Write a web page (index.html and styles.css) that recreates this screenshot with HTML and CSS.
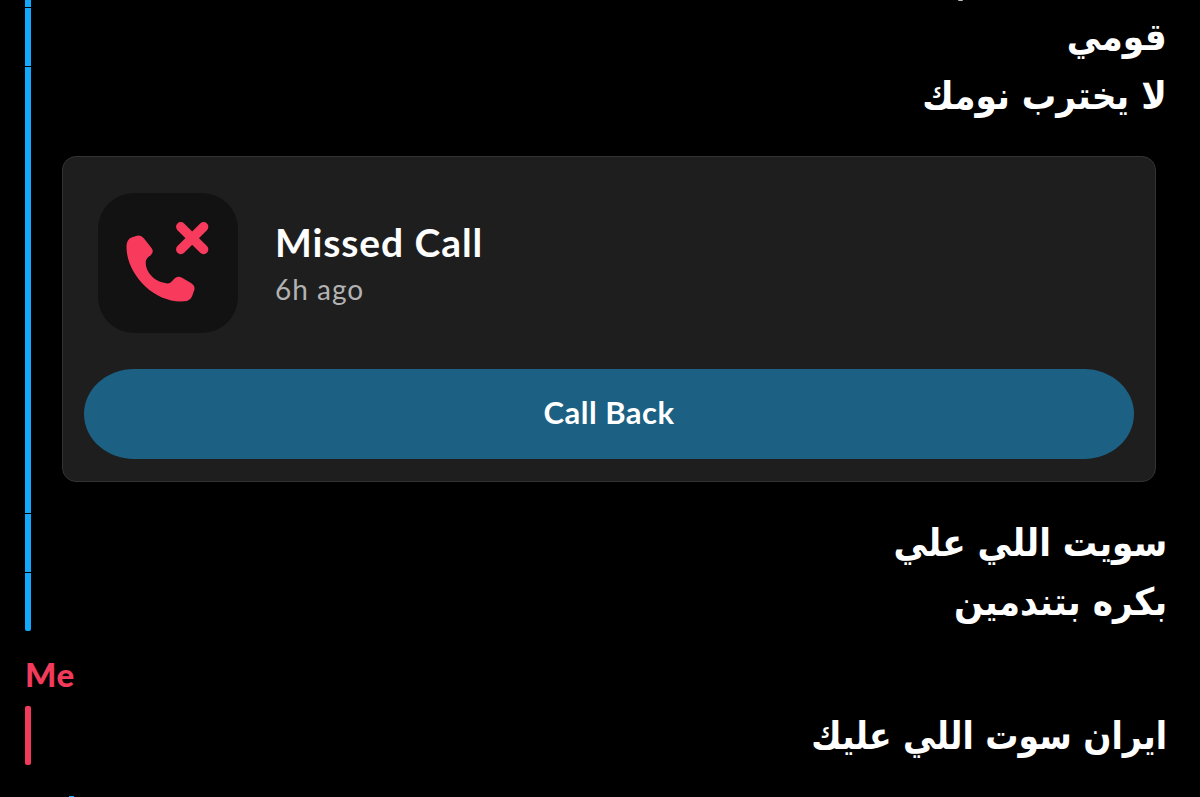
FILE: index.html
```
<!DOCTYPE html>
<html lang="ar">
<head>
  <meta charset="UTF-8">
  <meta name="viewport" content="width=device-width, initial-scale=1.0">
  <title>Chat</title>
  <link rel="stylesheet" href="styles.css">
</head>
<body>
  <div class="chat">
    <div class="group friend">
      <div class="row row-cut"><span class="dot"></span></div>
      <div class="row"><p class="message" dir="rtl">قومي</p></div>
      <div class="row"><p class="message" dir="rtl">لا يخترب نومك</p></div>
      <div class="row row-card">
        <div class="card" lang="en">
          <div class="card-top">
            <div class="call-icon">
              <svg viewBox="0 0 140 140" width="140" height="140">
                <path class="phone" d="M33.5 44.5 L39 42.8 Q43 41.8 46 45.5 L53.5 55 Q56.5 59 52.5 62.5 Q48 65 47.7 69 C47.5 80 57.5 89.5 69.3 90.4 Q72 90.5 74 88.2 L76.5 85.5 Q80 82.5 84 84.8 L93 90 Q97.5 93 96.3 97 L94 103.5 Q92.5 107 89 108 C58 112.5 28.5 82 28.5 54 Q28.5 46.5 33.5 44.5 Z"/>
                <path class="cross" d="M82.8 33.8 L105.6 56.4 M105.6 33.8 L82.8 56.4"/>
              </svg>
            </div>
            <div class="call-text">
              <h2 class="call-title">Missed Call</h2>
              <p class="call-time">6h ago</p>
            </div>
          </div>
          <button class="call-back">Call Back</button>
        </div>
      </div>
      <div class="row"><p class="message" dir="rtl">سويت اللي علي</p></div>
      <div class="row last"><p class="message" dir="rtl">بكره بتندمين</p></div>
    </div>
    <div class="sender" lang="en">Me</div>
    <div class="group me">
      <div class="row only"><p class="message message-long" dir="rtl">ايران سوت اللي عليك</p></div>
    </div>
    <div class="next-sender"></div>
  </div>
</body>
</html>
```

FILE: styles.css
```
* {
  box-sizing: border-box;
  margin: 0;
  padding: 0;
}

body {
  background-color: #000;
  color: #fff;
  font-family: Lato, "DejaVu Sans", sans-serif;
  overflow: hidden;
}

.chat {
  width: 1200px;
  height: 797px;
  overflow: hidden;
}

.group {
  --bar: #14a8fd;
  padding-left: 25px;
}

.me {
  --bar: #f23b5b;
}

.row {
  display: flex;
  justify-content: flex-end;
  height: 59px;
  padding-right: 33px;
}

/* vertical line in the sender's colour */
.row::before {
  content: "";
  width: 6px;
  margin: 1px auto 0 0;
  background-color: var(--bar);
}

.row-cut {
  height: 7px;
  padding-right: 237px;
}

.row-cut::before,
.row-card::before {
  margin-top: 0;
}

.last::before {
  border-radius: 0 0 2px 2px;
}

.only::before {
  margin-top: 0;
  border-radius: 2px;
}

.dot {
  width: 5px;
  height: 1px;
  border-radius: 0 0 3px 3px;
  background-color: #bbb;
}

.message {
  padding-top: 1px;
  font-family: "DejaVu Sans", sans-serif;
  font-size: 38px;
  font-weight: bold;
  line-height: 59px;
  white-space: nowrap;
  transform: scaleX(0.903);
  transform-origin: right center;
}

.message-long {
  transform: scaleX(0.87);
}

.row-card {
  height: 388px;
  padding-right: 44px;
}

.card {
  width: 1094px;
  height: 326px;
  margin-top: 31px;
  padding: 36px 21px 21px;
  border: 1px solid #333;
  border-radius: 14px;
  background-color: #1e1e1e;
}

.card-top {
  display: flex;
  gap: 37px;
  padding-left: 14px;
}

.call-icon {
  width: 140px;
  height: 140px;
  border-radius: 36px;
  background-color: #121212;
}

.call-icon svg {
  display: block;
}

.phone {
  fill: #f83b5c;
}

.cross {
  fill: none;
  stroke: #f83b5c;
  stroke-width: 9.5;
  stroke-linecap: round;
}

.call-text {
  padding-top: 25px;
}

.call-title {
  font-size: 39px;
  line-height: 48px;
  letter-spacing: 0.9px;
}

.call-time {
  color: #b2b2b2;
  font-size: 28px;
  line-height: 46px;
  letter-spacing: 1px;
}

.call-back {
  display: block;
  width: 1050px;
  height: 90px;
  margin-top: 36px;
  padding-bottom: 4px;
  border: none;
  border-radius: 50px / 45px;
  background-color: #1c6083;
  color: #fff;
  font-family: inherit;
  font-size: 31px;
  font-weight: bold;
  letter-spacing: 0.5px;
}

.sender {
  height: 75px;
  padding: 23px 0 0 25px;
  color: #f23b5b;
  font-size: 33px;
  font-weight: 900;
  line-height: 40px;
  letter-spacing: 0.5px;
}

.next-sender {
  width: 5px;
  height: 1px;
  margin: 31px 0 0 69px;
  background-color: #14a8fd;
}
```
